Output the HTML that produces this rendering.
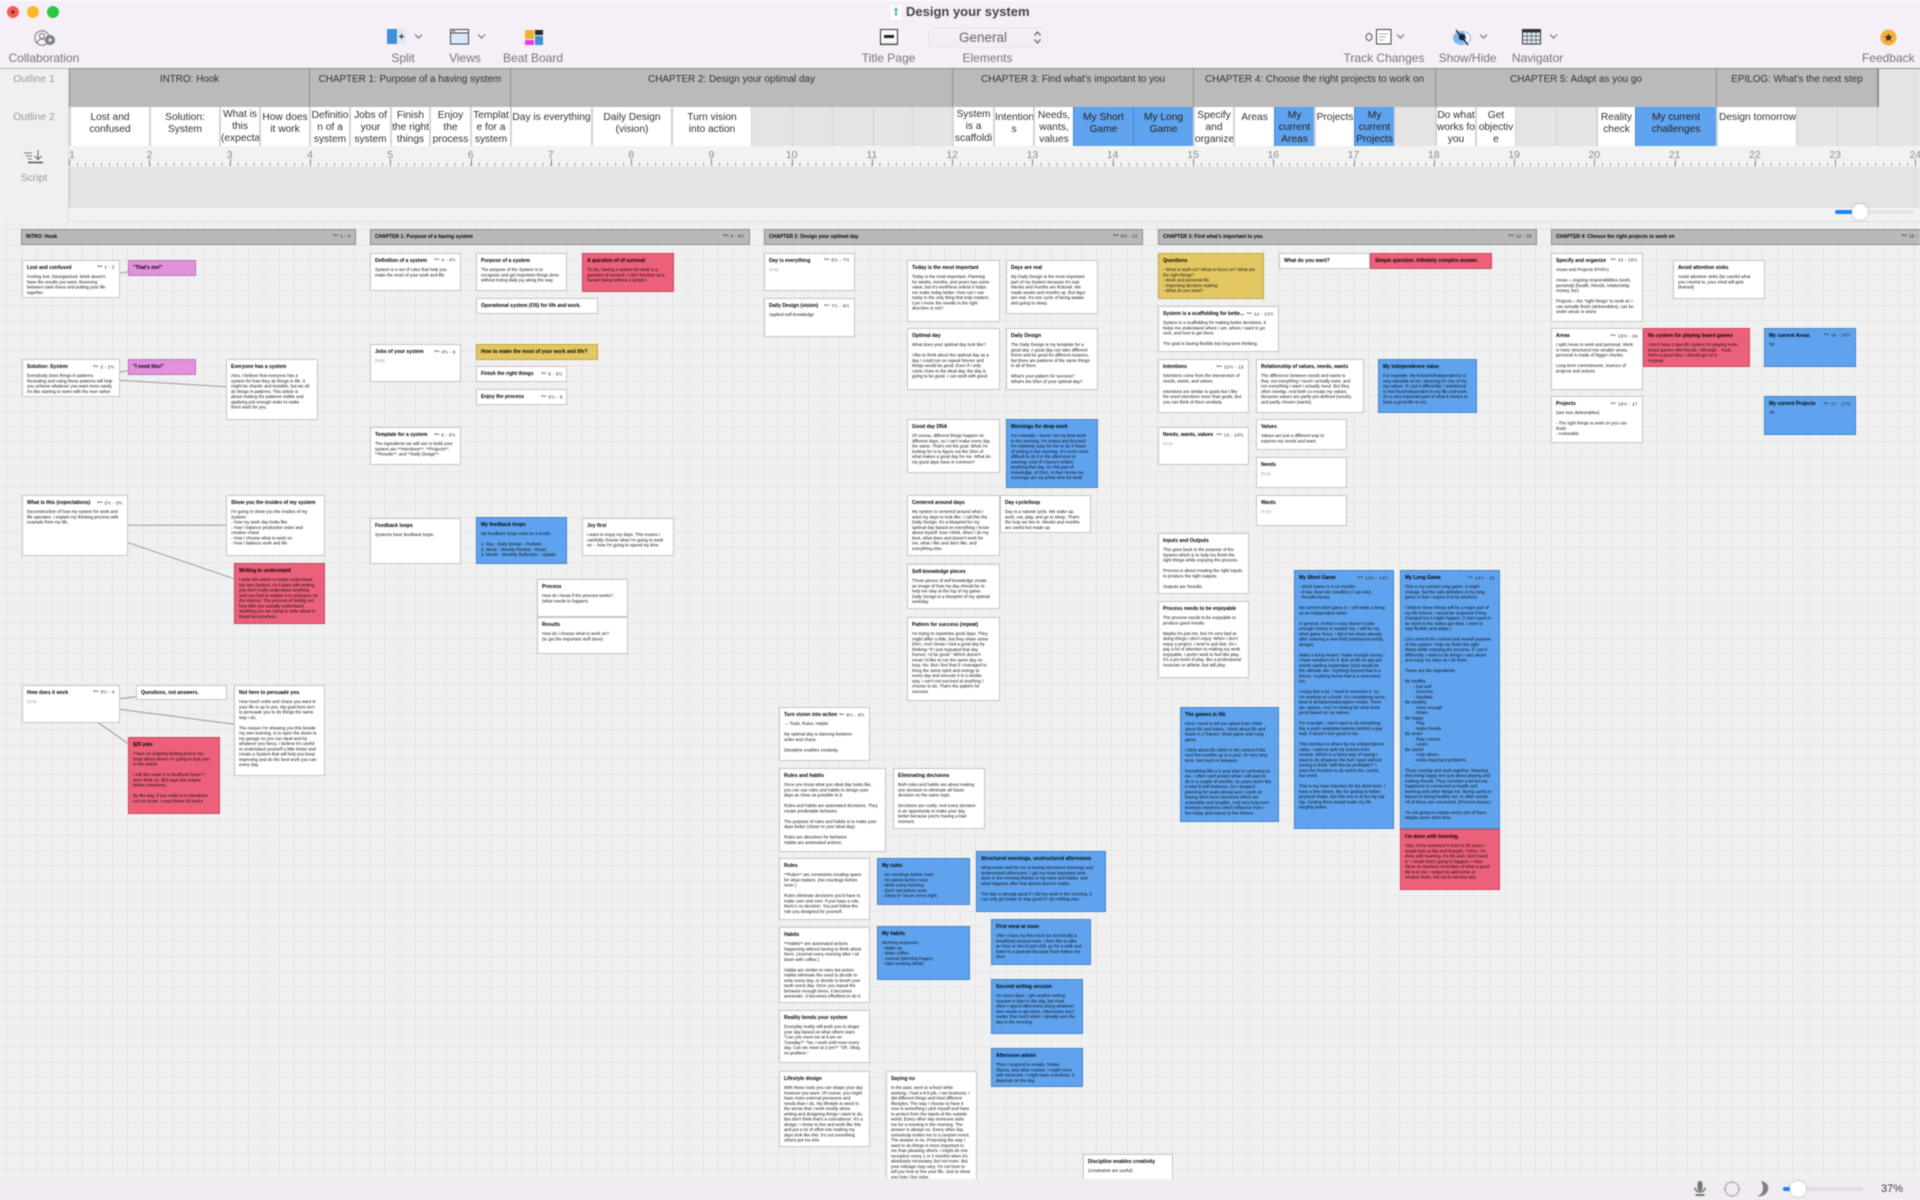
<!DOCTYPE html>
<html><head><meta charset="utf-8"><title>Design your system</title>
<style>
html,body{margin:0;padding:0;width:1920px;height:1200px;overflow:hidden;background:#f5eff7}
#a{position:relative;width:1920px;height:1200px;overflow:hidden;font-family:"Liberation Sans",sans-serif;filter:blur(.6px);background:#f0f0f0}
.ab{position:absolute}
.lb{position:absolute;top:51px;font-size:12px;line-height:15px;color:#757575;transform:translateX(-50%);white-space:nowrap}
#tb{position:absolute;left:0;top:0;width:1920px;height:68px;background:#f5eff7;border-top:1px solid #fff;box-sizing:border-box}
.o1,.o2{position:absolute;box-sizing:border-box;overflow:hidden;text-align:center;line-height:12px;color:#333;white-space:nowrap}
.o1{top:68px;height:39px;font-size:9.900px;background:#bababa;border-left:1px solid #8f8f8f;border-top:1px solid #8f8f8f;padding-top:5px}
.o2{top:107px;height:39px;font-size:10.200px;background:#fff;border-left:2px solid #d4d4d4;padding-top:5px}
.o2.t{padding-top:2px}
.o2.e{background:#e4e4e4;border-left:1px solid #d2d2d2}
.o2.x{background:#5fa3ee;border-left:1px solid #4a86c8;color:#222}
.side{position:absolute;left:0;width:69px;text-align:center;font-size:10.400px;color:#9a9a9a;background:#f0f0f0;box-sizing:border-box;border-right:1px solid #dcdcdc}
em{position:absolute;top:149px;font-style:normal;font-size:10.400px;line-height:13px;color:#8a8a8a;transform:translateX(-50%)}
i.k{position:absolute;top:159px;width:1px;height:7px;background:#8a8a8a}
#cv{position:absolute;left:0;top:222px;width:1920px;height:957px;overflow:hidden;background-color:#f0f0f0;background-image:repeating-linear-gradient(90deg,transparent 0,transparent 6px,#e5e5e5 6px,#e5e5e5 7px,transparent 7px,transparent 15.140px),repeating-linear-gradient(180deg,transparent 0,transparent 7.200px,#e5e5e5 7.200px,#e5e5e5 8.200px,transparent 8.200px,transparent 15.140px)}
#in{position:absolute;left:0;top:-222px;width:1920px;height:1179px;overflow:hidden}
.c{position:absolute;box-sizing:border-box;background:#fff;border:1px solid #c6c6c6}
.c.bl{background:#5fa3ee;border-color:#4a86c6}
.c.r{background:#ec607a;border-color:#c94a64}
.c.pk{background:#e292dd;border-color:#b878b6}
.c.y{background:#e3c763;border-color:#c2a544}
.c.h{background:#b9b9b9;border:1px solid #8f8f8f;height:16px;top:229.300px}
.c.clip{overflow:hidden}
.c b{position:absolute;left:4px;top:4.200px;font-size:20px;line-height:20px;color:#000;font-weight:bold;white-space:nowrap;transform:scale(.25);transform-origin:0 0}
.c p{margin:0;position:absolute;left:4px;top:13.100px;font-size:17.500px;line-height:21px;color:#111;white-space:pre;transform:scale(.25);transform-origin:0 0}
.c p.g{color:#aaa}
.c.bl p,.c.r p{color:#0c0c0c}
.c u{position:absolute;right:4px;top:3.400px;font-size:18px;line-height:18px;color:#222;text-decoration:none;white-space:nowrap;transform:scale(.25);transform-origin:100% 0;letter-spacing:1px}
.c u small{font-size:10px;vertical-align:7px;margin-right:8px;letter-spacing:0}
.c.h b{top:3.800px}
.c.h u{top:3px}
</style></head><body><div id="a">

<div id="tb"></div>
<svg class="ab" style="left:0;top:0" width="70" height="24"><circle cx="13" cy="12" r="6" fill="#f25f57"/><circle cx="33" cy="12" r="6" fill="#fcb62d"/><circle cx="53" cy="12" r="6" fill="#2ac840"/><circle cx="13" cy="12" r="1.600" fill="#8c1a14"/></svg>
<svg class="ab" style="left:890px;top:4px" width="12" height="17"><rect x="1" y="1" width="10" height="15" fill="#fff"/><path d="M6 3L3.500 6.500H5V12H7V6.500H8.500Z" fill="#62c28a"/></svg>
<div class="ab" style="left:906px;top:4px;font-size:13px;line-height:16px;font-weight:bold;color:#444;white-space:nowrap">Design your system</div>

<!-- Collaboration -->
<svg class="ab" style="left:34px;top:30px" width="23" height="16" viewBox="0 0 23 16"><circle cx="8" cy="8" r="7.200" fill="none" stroke="#777" stroke-width="1"/><circle cx="8" cy="6" r="2.600" fill="none" stroke="#777"/><path d="M3 13c1-3 3-4 5-4s4 1 5 4" fill="none" stroke="#777"/><circle cx="16" cy="10" r="5" fill="#7a7a7a"/><path d="M16 7.500v5M13.500 10h5" stroke="#fff" stroke-width="1.100"/></svg>
<div class="lb" style="left:44px">Collaboration</div>
<!-- Split -->
<svg class="ab" style="left:387px;top:29px" width="20" height="16"><rect width="10" height="15" fill="#3f8fd8"/><rect x="10" width="9" height="15" fill="#dfe9f6"/><path d="M14.500 5v5M12 7.500h5" stroke="#222" stroke-width="1"/></svg>
<svg class="ab" style="left:414px;top:33px" width="9" height="7"><path d="M1 1.500L4.500 5L8 1.500" fill="none" stroke="#777" stroke-width="1.200"/></svg>
<div class="lb" style="left:403px">Split</div>
<!-- Views -->
<svg class="ab" style="left:450px;top:29px" width="19" height="16"><rect x=".5" y=".5" width="18" height="14.500" fill="#d9e8f9" stroke="#444"/><rect x=".5" y=".5" width="18" height="3.500" fill="#f4f4f4" stroke="#444"/><path d="M2 2.200h3" stroke="#444"/></svg>
<svg class="ab" style="left:477px;top:33px" width="9" height="7"><path d="M1 1.500L4.500 5L8 1.500" fill="none" stroke="#777" stroke-width="1.200"/></svg>
<div class="lb" style="left:465px">Views</div>
<!-- Beat Board -->
<svg class="ab" style="left:525px;top:30px" width="19" height="16"><rect width="9" height="9" fill="#efb02f"/><rect x="10" width="8" height="5" fill="#2a2a2a"/><rect y="10" width="9" height="5" fill="#e33fe0"/><rect x="10" y="6" width="8" height="9" fill="#3f8fd8"/></svg>
<div class="lb" style="left:533px">Beat Board</div>
<!-- Title page -->
<svg class="ab" style="left:880px;top:29px" width="19" height="17"><rect x=".5" y=".5" width="17" height="15" fill="#f8f8f8" stroke="#333"/><rect x="4" y="6" width="10" height="3" fill="#222"/><path d="M1 14.500h16" stroke="#888" stroke-dasharray="1 1"/></svg>
<div class="lb" style="left:888.500px">Title Page</div>
<!-- Elements -->
<div class="ab" style="left:928px;top:27px;width:120px;height:21px;box-sizing:border-box;border:1px solid #ebe5ed;border-radius:5px;background:#f3edf5;font-size:13.500px;line-height:19px;color:#666;padding-left:30px">General</div>
<svg class="ab" style="left:1033px;top:30px" width="9" height="15"><path d="M1.500 5.500L4.500 2L7.500 5.500M1.500 9.500L4.500 13L7.500 9.500" fill="none" stroke="#666" stroke-width="1.300"/></svg>
<div class="lb" style="left:987.500px">Elements</div>
<!-- Track Changes -->
<svg class="ab" style="left:1364px;top:29px" width="28" height="16"><ellipse cx="5" cy="8" rx="3" ry="3.500" fill="none" stroke="#555" stroke-width="1"/><rect x="12.500" y=".5" width="14.500" height="14.500" fill="#fff" stroke="#444"/><path d="M15 5h9M15 8h7M15 11h5" stroke="#aaa"/></svg>
<svg class="ab" style="left:1396px;top:33px" width="9" height="7"><path d="M1 1.500L4.500 5L8 1.500" fill="none" stroke="#777" stroke-width="1.200"/></svg>
<div class="lb" style="left:1384px">Track Changes</div>
<!-- Show/Hide -->
<svg class="ab" style="left:1452px;top:29px" width="20" height="17"><ellipse cx="10" cy="9" rx="8.500" ry="6.500" fill="#fff" stroke="#7fb0e8"/><ellipse cx="8" cy="9" rx="6.500" ry="6.500" fill="#7fb5ee"/><circle cx="10" cy="8" r="3.300" fill="#1d2a3a"/><path d="M4 1l12 15" stroke="#222" stroke-width="1.400"/></svg>
<svg class="ab" style="left:1479px;top:33px" width="9" height="7"><path d="M1 1.500L4.500 5L8 1.500" fill="none" stroke="#777" stroke-width="1.200"/></svg>
<div class="lb" style="left:1467.600px">Show/Hide</div>
<!-- Navigator -->
<svg class="ab" style="left:1522px;top:29px" width="20" height="16"><rect x=".5" y=".5" width="18" height="14.500" fill="#d9e8f9" stroke="#333"/><rect x=".5" y=".5" width="18" height="3" fill="#333"/><path d="M5 3v12M9.500 3v12M14 3v12M1 7h17M1 11h17" stroke="#555" stroke-width=".7"/></svg>
<svg class="ab" style="left:1549px;top:33px" width="9" height="7"><path d="M1 1.500L4.500 5L8 1.500" fill="none" stroke="#777" stroke-width="1.200"/></svg>
<div class="lb" style="left:1537.500px">Navigator</div>
<!-- Feedback -->
<svg class="ab" style="left:1880px;top:29px" width="17" height="17"><circle cx="8.500" cy="8.500" r="8" fill="#f4b23c"/><path d="M8.500 4.300l1.200 2.800 3 .2-2.300 1.900.8 3-2.700-1.600-2.700 1.600.8-3L4.300 7.300l3-.2z" fill="#333"/></svg>
<div class="lb" style="left:1888.300px">Feedback</div>

<!-- Side labels -->
<div class="side" style="top:68px;height:39px;line-height:22px;border-top:1px solid #b5b5b5">Outline 1</div>
<div class="side" style="top:107px;height:39px;line-height:22px">Outline 2</div>
<div class="side" style="top:146px;height:22px"></div>
<div class="side" style="top:168px;height:39px;line-height:22px">Script</div>
<div class="side" style="top:207px;height:15px"></div>

<!-- Outline 1 -->
<div class="o1" style="left:69px;width:240px">INTRO: Hook</div>
<div class="o1" style="left:309px;width:201px">CHAPTER 1: Purpose of a having system</div>
<div class="o1" style="left:510px;width:442px">CHAPTER 2: Design your optimal day</div>
<div class="o1" style="left:952px;width:241px">CHAPTER 3: Find what's important to you</div>
<div class="o1" style="left:1193px;width:242px">CHAPTER 4: Choose the right projects to work on</div>
<div class="o1" style="left:1435px;width:281px">CHAPTER 5: Adapt as you go</div>
<div class="o1" style="left:1716px;width:161px">EPILOG: What's the next step</div>
<div class="o1" style="left:1877px;width:43px;background:#e4e4e4;border-left:2px solid #8f8f8f"></div>

<!-- Outline 2 -->
<div class="o2" style="left:69px;width:80px">Lost and<br>confused</div>
<div class="o2" style="left:149px;width:70px">Solution:<br>System</div>
<div class="o2 t" style="left:219px;width:40px">What is<br>this<br>(expecta</div>
<div class="o2" style="left:259px;width:50px">How does<br>it work</div>
<div class="o2 t" style="left:309px;width:40px;padding-top:3px">Definitio<br>n of a<br>system</div>
<div class="o2 t" style="left:349px;width:41px;padding-top:3px">Jobs of<br>your<br>system</div>
<div class="o2 t" style="left:390px;width:39px;padding-top:3px">Finish<br>the right<br>things</div>
<div class="o2 t" style="left:429px;width:41px;padding-top:3px">Enjoy<br>the<br>process</div>
<div class="o2 t" style="left:470px;width:40px;padding-top:3px">Templat<br>e for a<br>system</div>
<div class="o2" style="left:510px;width:81px">Day is everything</div>
<div class="o2" style="left:591px;width:80px">Daily Design<br>(vision)</div>
<div class="o2" style="left:671px;width:80px">Turn vision<br>into action</div>
<div class="o2 e" style="left:751px;width:41px"></div>
<div class="o2 e" style="left:792px;width:40px"></div>
<div class="o2 e" style="left:832px;width:41px"></div>
<div class="o2 e" style="left:873px;width:39px"></div>
<div class="o2 e" style="left:912px;width:40px"></div>
<div class="o2 t" style="left:952px;width:41px">System<br>is a<br>scaffoldi</div>
<div class="o2" style="left:993px;width:40px">Intention<br>s</div>
<div class="o2 t" style="left:1033px;width:40px;padding-top:3px">Needs,<br>wants,<br>values</div>
<div class="o2 x" style="left:1073px;width:60px">My Short<br>Game</div>
<div class="o2 x" style="left:1133px;width:60px">My Long<br>Game</div>
<div class="o2 t" style="left:1193px;width:40px;padding-top:3px">Specify<br>and<br>organize</div>
<div class="o2" style="left:1233px;width:41px">Areas</div>
<div class="o2 x t" style="left:1274px;width:40px;padding-top:3px">My<br>current<br>Areas</div>
<div class="o2" style="left:1314px;width:40px">Projects</div>
<div class="o2 x t" style="left:1354px;width:40px;padding-top:3px">My<br>current<br>Projects</div>
<div class="o2 e" style="left:1394px;width:41px"></div>
<div class="o2 t" style="left:1435px;width:40px;padding-top:3px">Do what<br>works for<br>you</div>
<div class="o2 t" style="left:1475px;width:40px;padding-top:3px">Get<br>objectiv<br>e</div>
<div class="o2 e" style="left:1515px;width:41px"></div>
<div class="o2 e" style="left:1556px;width:40px"></div>
<div class="o2" style="left:1596px;width:39px">Reality<br>check</div>
<div class="o2 x" style="left:1635px;width:81px">My current<br>challenges</div>
<div class="o2" style="left:1716px;width:80px;text-align:left;padding-left:1px">Design tomorrow</div>
<div class="o2 e" style="left:1796px;width:41px"></div>
<div class="o2 e" style="left:1837px;width:40px"></div>
<div class="o2 e" style="left:1877px;width:43px"></div>

<!-- Ruler -->
<div class="ab" style="left:69px;top:146px;width:1851px;height:22px;background:#f2f2f2;border-bottom:1px solid #dedede;box-sizing:border-box"></div>
<div class="ab" style="left:69px;top:163px;width:1851px;height:3px;background:repeating-linear-gradient(90deg,#9a9a9a 0,#9a9a9a 1px,transparent 1px,transparent 8.027px)"></div>
<i class="k" style="left:69px"></i><i class="k" style="left:149px"></i><i class="k" style="left:230px"></i><i class="k" style="left:310px"></i><i class="k" style="left:390px"></i><i class="k" style="left:471px"></i><i class="k" style="left:551px"></i><i class="k" style="left:631px"></i><i class="k" style="left:711px"></i><i class="k" style="left:792px"></i><i class="k" style="left:872px"></i><i class="k" style="left:952px"></i><i class="k" style="left:1032px"></i><i class="k" style="left:1113px"></i><i class="k" style="left:1193px"></i><i class="k" style="left:1273px"></i><i class="k" style="left:1354px"></i><i class="k" style="left:1434px"></i><i class="k" style="left:1514px"></i><i class="k" style="left:1594px"></i><i class="k" style="left:1675px"></i><i class="k" style="left:1755px"></i><i class="k" style="left:1835px"></i><i class="k" style="left:1915px"></i>
<em style="left:72px">1</em><em style="left:149.500px">2</em><em style="left:229.700px">3</em><em style="left:310px">4</em><em style="left:390.300px">5</em><em style="left:470.600px">6</em><em style="left:550.800px">7</em><em style="left:631.100px">8</em><em style="left:711.400px">9</em><em style="left:791.600px">10</em><em style="left:871.900px">11</em><em style="left:952.200px">12</em><em style="left:1032.400px">13</em><em style="left:1112.700px">14</em><em style="left:1193px">15</em><em style="left:1273.300px">16</em><em style="left:1353.500px">17</em><em style="left:1433.800px">18</em><em style="left:1514.100px">19</em><em style="left:1594.300px">20</em><em style="left:1674.600px">21</em><em style="left:1754.900px">22</em><em style="left:1835.200px">23</em><em style="left:1915.400px">24</em>
<svg class="ab" style="left:22px;top:148px" width="26" height="16"><path d="M2 5h8M4 8h6M6 11h4" stroke="#777" stroke-width="1"/><path d="M16 2v9M12.500 8l3.500 3.500L19.500 8" fill="none" stroke="#666" stroke-width="1"/><path d="M6 14.500h15" stroke="#555" stroke-width="1.500"/></svg>

<!-- Script -->
<div class="ab" style="left:69px;top:168px;width:1851px;height:39px;background:#e4e4e4;border-left:1px solid #b9c9dc;box-sizing:border-box"></div>
<div class="ab" style="left:69px;top:207px;width:1851px;height:15px;background:#f2f2f2;border-top:1px solid #dedede;border-bottom:1px solid #dedede;box-sizing:border-box"></div>
<div class="ab" style="left:1835px;top:210px;width:79px;height:4px;background:#e4e4e4;border-radius:2px"></div>
<div class="ab" style="left:1835px;top:210px;width:22px;height:4px;background:#1e82ef;border-radius:2px"></div>
<div class="ab" style="left:1852px;top:204px;width:16px;height:16px;background:#fff;border-radius:50%;box-shadow:0 0 2px #aaa"></div>

<!-- Canvas -->
<div id="cv"><div id="in">
<svg class="ab" style="left:0;top:0" width="1920" height="1179" fill="none" stroke="#999" stroke-width="1">
<path d="M120 273.300L127.700 271.700M120 372L127.700 370.700M120 380.300L226 386.700M128 525.300H226M128 542.700L234 578.700M120 698.700L135.700 696.700M120 709.300L234.300 724.300M98.300 722.700L127.700 743.300"/>
</svg>

<!-- INTRO -->
<div class="c h" style="left:21.300px;width:334.400px"><b>INTRO: Hook</b><u><small>Beat</small>1 - 4</u></div>
<div class="c" style="left:21.700px;top:260px;width:98.300px;height:38.300px"><b>Lost and confused</b><u><small>Beat</small>1 - 2</u><p>Feeling lost. Disorganized. Work doesn't
have the results you want. Bouncing
between total chaos and putting your life
together.</p></div>
<div class="c pk" style="left:127.700px;top:260px;width:68.600px;height:16.300px"><b>"That's me!"</b></div>
<div class="c" style="left:21.700px;top:359.300px;width:98.300px;height:37.400px"><b>Solution: System</b><u><small>Beat</small>2 - 2½</u><p>Everybody does things in patterns.
Revealing and using these patterns will help
you achieve whatever you want more easily.
It's like starting to swim with the river rather</p></div>
<div class="c pk" style="left:127.700px;top:359.300px;width:68.600px;height:15.400px"><b>"I need this!"</b></div>
<div class="c" style="left:226px;top:359.300px;width:91.700px;height:60.400px"><b>Everyone has a system</b><p>Also, I believe that everyone has a
system for how they do things in life. It
might be chaotic and invisible, but we all
do things in patterns. This article is
about making the patterns visible and
applying just enough order to make
them work for you.</p></div>
<div class="c" style="left:21.700px;top:495.300px;width:106.300px;height:60.400px"><b>What is this (expectations)</b><u><small>Beat</small>2½ - 3½</u><p>Deconstruction of how my system for work and
life operates. I explain my thinking process with
example from my life.</p></div>
<div class="c" style="left:226px;top:495.300px;width:98.700px;height:60.400px"><b>Show you the insides of my system</b><p>I'm going to show you the insides of my
System:
- How my work day looks like
- How I balance productive order and
creative chaos
- How I choose what to work on
- How I balance work and life</p></div>
<div class="c r" style="left:234px;top:563.300px;width:90.700px;height:61px"><b>Writing to understand</b><p>I write this article to better understand
my own System. As it goes with writing,
you don't really understand anything
until you had to explain it to strangers on
the internet. The process of finding out
how little you actually understand
anything you are trying to write about is
brutal but priceless.</p></div>
<div class="c" style="left:21.700px;top:685px;width:98.300px;height:37.700px"><b>How does it work</b><u><small>Beat</small>3½ - 4</u><p class="g">Body</p></div>
<div class="c" style="left:135.700px;top:685px;width:91px;height:15.300px"><b>Questions, not answers.</b></div>
<div class="c" style="left:234.300px;top:685px;width:90.400px;height:90.700px"><b>Not here to persuade you</b><p>How much order and chaos you want in
your life is up to you. My goal here isn't
to persuade you to do things the same
way I do.

The reason I'm showing you this beside
my own learning, is to open the doors to
my garage so you can steal and try
whatever you fancy. I believe it's useful
to understand yourself a little better and
create a System that will help you keep
improving and do the best work you can
every day.</p></div>
<div class="c r" style="left:127.700px;top:737px;width:92px;height:77px"><b>$20 joke</b><p>I have an ongoing betting pool in my
head about where I'm going to lose you
in this article.

I will she make it to feedback loops? I
don't think so. $20 says she leaves
before Intentions.

By the way, if you make it to Intentions.
Let me know. I need those 20 bucks.</p></div>

<!-- CHAPTER 1 -->
<div class="c h" style="left:370px;width:380px"><b>CHAPTER 1: Purpose of a having system</b><u><small>Beat</small>4 - 6½</u></div>
<div class="c" style="left:370.300px;top:252.700px;width:90.400px;height:38.600px"><b>Definition of a system</b><u><small>Beat</small>4 - 4½</u><p>System is a set of rules that help you
make the most of your work and life.</p></div>
<div class="c" style="left:476.300px;top:252.700px;width:91px;height:38.600px"><b>Purpose of a system</b><p>The purpose of the System is to
recognize and get important things done
without losing daily joy along the way.</p></div>
<div class="c r" style="left:581.700px;top:252.700px;width:92.300px;height:39px"><b>A question of of survival</b><p>To me, having a system for work is a
question of survival. I can't function as a
human being without a system.</p></div>
<div class="c" style="left:476.300px;top:298.300px;width:121.400px;height:15.400px"><b>Operational system (OS) for life and work.</b></div>
<div class="c" style="left:370.300px;top:344.300px;width:90.400px;height:37.400px"><b>Jobs of your system</b><u><small>Beat</small>4½ - 5</u><p class="g">Body</p></div>
<div class="c y" style="left:476.300px;top:344px;width:121.400px;height:15.700px"><b>How to make the most of your work and life?</b></div>
<div class="c" style="left:476.300px;top:366.300px;width:91px;height:15.400px"><b>Finish the right things</b><u><small>Beat</small>5 - 5½</u></div>
<div class="c" style="left:476.300px;top:389.300px;width:91px;height:15.400px"><b>Enjoy the process</b><u><small>Beat</small>5½ - 6</u></div>
<div class="c" style="left:370.300px;top:427.300px;width:90.400px;height:37.400px"><b>Template for a system</b><u><small>Beat</small>6 - 6½</u><p>The ingredients we will use to build your
system are **Intentions**, **Projects**,
**Results**, and **Daily Design**.</p></div>
<div class="c" style="left:370.300px;top:517.700px;width:90.400px;height:46.300px"><b>Feedback loops</b><p>Systems have feedback loops.</p></div>
<div class="c bl" style="left:476.300px;top:517.300px;width:91px;height:46.700px"><b>My feedback loops</b><p>My feedback loops exist on 3 levels.

1. Day - Daily Design - Perform
2. Week - Weekly Review - Reset
3. Month - Monthly Reflection - Update</p></div>
<div class="c" style="left:581.700px;top:517.700px;width:92px;height:38.300px"><b>Joy first</b><p>I want to enjoy my days. This means I
carefully choose what I'm going to work
on -- how I'm going to spend my time.</p></div>
<div class="c" style="left:537px;top:578.700px;width:91.300px;height:38.400px"><b>Process</b><p>How do I know if the process works?
(what needs to happen)</p></div>
<div class="c" style="left:537px;top:616.700px;width:91.300px;height:37.600px"><b>Results</b><p>How do I choose what to work on?
(to get the important stuff done)</p></div>

<!-- CHAPTER 2 -->
<div class="c h" style="left:764.300px;width:378.400px"><b>CHAPTER 2: Design your optimal day</b><u><small>Beat</small>6½ - 12</u></div>
<div class="c" style="left:764.300px;top:252.700px;width:90.400px;height:38.600px"><b>Day is everything</b><u><small>Beat</small>6½ - 7½</u><p class="g">Body</p></div>
<div class="c" style="left:764.300px;top:298.300px;width:90.400px;height:38.400px"><b>Daily Design (vision)</b><u><small>Beat</small>7½ - 8½</u><p>Applied self-knowledge</p></div>
<div class="c" style="left:907.300px;top:260px;width:92.400px;height:61.700px"><b>Today is the most important</b><p>Today is the most important. Planning
for weeks, months, and years has some
value, but it's worthless unless it helps
me make today better. How can I use
today in the only thing that truly matters.
Can I move the needle in the right
direction or not?</p></div>
<div class="c" style="left:1006px;top:260px;width:91.700px;height:53.700px"><b>Days are real</b><p>My Daily Design is the most important
part of my System because it's real.
Weeks and months are fictional. We
made weeks and months up. But days
are real. It's one cycle of being awake
and going to sleep.</p></div>
<div class="c" style="left:907.300px;top:328.300px;width:92.400px;height:61.400px"><b>Optimal day</b><p>What does your optimal day look like?

I like to think about the optimal day as a
day I could run on repeat forever and
things would be good. Even if I only
come close to the ideal day, the day is
going to be good. I can work with good.</p></div>
<div class="c" style="left:1006px;top:328.300px;width:91.700px;height:61.400px"><b>Daily Design</b><p>The Daily Design is my template for a
good day. A good day can take different
forms and be good for different reasons,
but there are patterns of the same things
in all of them.

What's your pattern for success?
What's the DNA of your optimal day?</p></div>
<div class="c" style="left:907.300px;top:419.300px;width:92.400px;height:53.400px"><b>Good day DNA</b><p>Of course, different things happen on
different days, so I can't make every day
the same. That's not the goal. What I'm
looking for is to figure out the DNA of
what makes a good day for me. What do
my good days have in common?</p></div>
<div class="c bl" style="left:1006px;top:419.300px;width:92px;height:68.700px"><b>Mornings for deep work</b><p>For example: I know I do my best work
in the morning. I'm rested and focused.
It's relatively easy for me to do 3 hours
of writing in the morning. It's much more
difficult to do it in the afternoon or
evening, even if I haven't written
anything that day. So this part of
knowledge, of DNA, is that I know my
mornings are my prime time for work.</p></div>
<div class="c" style="left:907.300px;top:495.300px;width:92.400px;height:60.400px"><b>Centered around days</b><p>My system is centered around what I
want my days to look like. I call this the
Daily Design. It's a blueprint for my
optimal day based on everything I know
about myself: how I think, when I do my
best, what does and doesn't work for
me, what I like and don't like, and
everything else.</p></div>
<div class="c" style="left:999.700px;top:495.300px;width:91px;height:37.400px"><b>Day cycle/loop</b><p>Day is a natural cycle. We wake up,
work, eat, play, and go to sleep. That's
the loop we live in. Weeks and months
are useful but made up.</p></div>
<div class="c" style="left:907.300px;top:563.700px;width:92.400px;height:45.300px"><b>Self-knowledge pieces</b><p>These pieces of self-knowledge create
an image of how my day should be to
help me stay at the top of my game.
Daily Design is a blueprint of my optimal
workday.</p></div>
<div class="c" style="left:907.300px;top:617px;width:92.400px;height:83.700px"><b>Pattern for success (repeat)</b><p>I'm trying to maximize good days. They
might differ a little, but they share some
DNA. And I know I had a good day by
thinking "If I just repeated that day
forever, I'd be good." Which doesn't
mean I'd like to run the same day on
loop. No. But I feel that if I managed to
bring the same spirit and energy to
every day and execute it in a similar
way, I can't not succeed at anything I
choose to do. That's the pattern for
success.</p></div>
<div class="c" style="left:779.300px;top:707.300px;width:90.700px;height:53.400px"><b>Turn vision into action</b><u><small>Beat</small>8½ - 9½</u><p>→ Tools, Rules, Habits

My optimal day is dancing between
order and chaos.

Discipline enables creativity.</p></div>
<div class="c" style="left:779.300px;top:768.300px;width:106.700px;height:83.700px"><b>Rules and habits</b><p>Once you know what you ideal day looks like,
you can use rules and habits to design your
days as close as possible to it.

Rules and habits are automated decisions. They
create predictable behavior.

The purpose of rules and habits is to make your
days better (closer to your ideal day).

Rules are directives for behavior.
Habits are automated actions.</p></div>
<div class="c" style="left:892.700px;top:768.300px;width:92px;height:60.400px"><b>Eliminating decisions</b><p>Both rules and habits are about making
one decision to eliminate all future
decision on the same topic.

Decisions are costly. And every decision
is an opportunity to make your day
better because you're having a bad
moment.</p></div>
<div class="c" style="left:779.300px;top:858.300px;width:90.700px;height:61.700px"><b>Rules</b><p>**Rules** are constraints creating space
for what matters. (No meetings before
noon.)

Rules eliminate decisions you'd have to
make over and over. If you have a rule,
there's no decision. You just follow the
rule you designed for yourself.</p></div>
<div class="c bl" style="left:975.700px;top:851.300px;width:130.300px;height:60.700px"><b>Structured mornings, unstructured afternoons</b><p>What works well for me is having structured mornings and
unstructured afternoons. I get my most important work
done in the morning thanks to my rules and habits, and
what happens after that almost doesn't matter.

The day is already good if I did my work in the morning. It
can only get better or stay good if I do nothing else.</p></div>
<div class="c bl" style="left:877.300px;top:858px;width:92.400px;height:47px"><b>My rules</b><p>- No meetings before noon
- No admin before noon
- Write every morning
- Don't eat before noon
- Sleep 8+ hours every night</p></div>
<div class="c bl" style="left:991px;top:919.300px;width:100px;height:46px"><b>First meal at noon</b><p>After I have my first meal (so technically a
breakfast) around noon, I then like to take
an hour or two to just chill, go for a walk and
listen to a podcast because food makes me
slow.</p></div>
<div class="c" style="left:779.300px;top:926.700px;width:90.700px;height:76.600px"><b>Habits</b><p>**Habits** are automated actions
happening without having to think about
them. (Journal every morning after I sit
down with coffee.)

Habits are similar to rules but action.
Habits eliminate the need to decide to
write every day, or decide to brush your
teeth every day. Once you repeat the
behavior enough times, it becomes
automatic. It becomes effortless to do it.</p></div>
<div class="c bl" style="left:877.300px;top:926.300px;width:92.400px;height:54px"><b>My habits</b><p>Morning sequence:
- Wake up
- Make coffee
- Journal (Morning Pages)
- Start working (WIW)</p></div>
<div class="c bl" style="left:991px;top:979.300px;width:92px;height:54.400px"><b>Second writing session</b><p>On some days, I get another writing
session in later in the day, but most
often I spend afternoons doing whatever
else needs to get done. Afternoons don't
matter that much when I already won the
day in the morning.</p></div>
<div class="c" style="left:779.300px;top:1010px;width:90.700px;height:53.300px"><b>Reality bends your system</b><p>Everyday reality will push you to shape
your day based on what others want.
"Can you meet me at 9 am on
Tuesday?" "No, I work until noon every
day. Can we meet at 2 pm?" "Oh. Okay,
no problem."</p></div>
<div class="c bl" style="left:991px;top:1047.700px;width:92px;height:39px"><b>Afternoon admin</b><p>Then I respond to emails, Twitter,
Slacks, and other comms. I might meet
with someone. I might have a workout. It
depends on the day.</p></div>
<div class="c" style="left:779.300px;top:1071px;width:90.700px;height:75.700px"><b>Lifestyle design</b><p>With these tools you can shape your day
however you want. Of course, you might
have more external pressures and
needs than I do. My lifestyle is weird in
the sense that I work mostly alone,
writing and designing things I want to do.
But don't think that's a coincidence. It's a
design. I chose to live and work like this
and put a lot of effort into making my
days look like this. It's not something
others put me into.</p></div>
<div class="c clip" style="left:885.700px;top:1071px;width:91px;height:108px;border-bottom:0"><b>Saying no</b><p>In the past, went to school while
working, I had a 9-5 job, I ran business. I
did different things and tried different
lifestyles. The way I choose to have it
now is something I pick myself and have
to protect from the inputs of the outside
world. Every other day someone asks
me for a meeting in the morning. The
answer is always no. Every other day
somebody invites me to a random event.
The answer is no. Protecting the way I
want to do things is more important to
me than pleasing others. I might do one
exception every 1 or 2 months when it's
absolutely necessary, but not more. But
your mileage may vary. I'm not here to
tell you how to live your life. Just to show
you how I live mine.</p></div>
<div class="c clip" style="left:1082.700px;top:1154.300px;width:90.600px;height:24.700px;border-bottom:0"><b>Discipline enables creativity</b><p>(constraints are useful)</p></div>

<!-- CHAPTER 3 -->
<div class="c h" style="left:1158.300px;width:378.400px"><b>CHAPTER 3: Find what's important to you</b><u><small>Beat</small>12 - 15</u></div>
<div class="c y" style="left:1158.300px;top:252.700px;width:105.700px;height:46px"><b>Questions</b><p>- What to work on? What to focus on? What are
the right things?
- Work and personal life
- Improving decision making
- What do you want?</p></div>
<div class="c" style="left:1278.700px;top:253.300px;width:91.300px;height:15.400px"><b>What do you want?</b></div>
<div class="c r" style="left:1370px;top:252.700px;width:122px;height:16px"><b>Simple question. Infinitely complex answer.</b></div>
<div class="c" style="left:1158.300px;top:306.300px;width:120.400px;height:45.400px"><b>System is a scaffolding for bette...</b><u><small>Beat</small>12 - 12½</u><p>System is a scaffolding for making better decisions. It
helps me understand where I am, where I want to go
next, and how to get there.

The goal is having flexible but long-term thinking.</p></div>
<div class="c" style="left:1158.300px;top:359.300px;width:90.700px;height:53.400px"><b>Intentions</b><u><small>Beat</small>12½ - 13</u><p>Intentions come from the intersection of
needs, wants, and values.

Intentions are similar to goals but I like
the word intentions more than goals. But
you can think of them similarly.</p></div>
<div class="c" style="left:1256.300px;top:359.300px;width:107.400px;height:53.400px"><b>Relationship of values, needs, wants</b><p>The difference between needs and wants is
that, not everything I need I actually want, and
not everything I want I actually need. But they
often overlap. And both co-create my values.
Because values are partly pre-defined (needs),
and partly chosen (wants).</p></div>
<div class="c bl" style="left:1377.700px;top:359.300px;width:99.300px;height:53.700px"><b>My independence value</b><p>For example: My freedom/independence is
very valuable to me. Meaning it's one of my
top values. If I put it differently: I want/need
to feel free/independent in my life and work.
It's a very important part of what it means to
have a good life to me.</p></div>
<div class="c" style="left:1158.300px;top:427.300px;width:90.700px;height:37.400px"><b>Needs, wants, values</b><u><small>Beat</small>13 - 13½</u><p class="g">Body</p></div>
<div class="c" style="left:1256.300px;top:419.300px;width:91px;height:30.700px"><b>Values</b><p>Values are just a different way to
express my needs and want.</p></div>
<div class="c" style="left:1256.300px;top:457.300px;width:91px;height:30.700px"><b>Needs</b><p class="g">Body</p></div>
<div class="c" style="left:1256.300px;top:495.300px;width:91px;height:30.700px"><b>Wants</b><p class="g">Body</p></div>
<div class="c" style="left:1158.300px;top:532.700px;width:90.700px;height:61.300px"><b>Inputs and Outputs</b><p>This goes back to the purpose of the
System which is to help me finish the
right things while enjoying the process.

Process is about creating the right inputs
to produce the right outputs.

Outputs are Results.</p></div>
<div class="c" style="left:1158.300px;top:600.700px;width:90.700px;height:77px"><b>Process needs to be enjoyable</b><p>The process needs to be enjoyable to
produce good results.

Maybe it's just me, but I'm very bad at
doing things I don't enjoy. When I don't
enjoy a project, I tend to quit fast. So I
pay a lot of attention to making my work
enjoyable. I prefer work to feel like play.
It's a pro level of play, like a professional
musician or athlete, but still play.</p></div>
<div class="c bl" style="left:1180.300px;top:706.700px;width:99px;height:115.300px"><b>The games in life</b><p>Here I need to tell you about how I think
about life and future. I think about life and
future in 2 frames: Short game and Long
game.

I think about life either in the context if the
next few months up to a year. Or very long
term. Not much in between.

Something like a 5-year plan is confusing to
me. I often can't predict what I will want to
do in a couple of months, so years seem like
a total B-ball business. So I stopped
planning for years ahead and I count on
having short term intentions which are
actionable and tangible. And very long-term
timeless intentions which influence how I
live today and expect to live forever.</p></div>
<div class="c bl" style="left:1294.300px;top:570.300px;width:99.700px;height:258.700px"><b>My Short Game</b><u><small>Beat</small>13½ - 14½</u><p>- Short Game is 3-12 months
- It has clear win condition (I can win)
- Results-heavy

My current short game is: I will make a living
as an independent writer.

In general, if what I enjoy doesn't make
enough money to sustain me, I will be my
short game focus. I did it two times already
after entering a new field (entrepreneurship,
design).

Make a living means "make enough money."
I have numbers for it: $2K profit on app per
month starting September 2022 would be
the ultimate win. Anything beyond that is a
bonus. Anything below that is a welcomed
too.

I enjoy this a lot. I need to monetize it. So
I'm working on a book. I'm considering some
kind of donation/subscription model. There
are options. And I'm looking for what feels
good based on my values.

For example, I don't want to do something
like a posh newsletter/articles behind a pay
wall. It doesn't feel good to me.

This intention is driven by my independence
value. I want to split my actions from
income. Which is a fancy way of saying I
want to do whatever the hell I want without
having to think "Will this be profitable?" I
want the freedom to do weird shit. Useful,
but weird.

This is my main intention for the short term. I
have a few others, like for getting in better
physical shape. But this one is at the top top
top. Getting there would make my life
tangibly better.</p></div>
<div class="c bl" style="left:1400px;top:570.300px;width:100px;height:258.700px"><b>My Long Game</b><u><small>Beat</small>14½ - 15</u><p>This is my current Long game. It might
change, but the sole definition of my long
game is that I expect it to be timeless.

I believe these things will be a major part of
my life forever. I would be surprised if they
changed but it might happen. (I don't want to
be stuck in the status quo bias. I want to
stay flexible and adapt.)

Let's remind the context and overall purpose
of this system: Help me finish the right
things while enjoying the process. If I put it
differently, I want to do things I care about
and enjoy my days as I do them.

These are the ingredients:

Be healthy
       - Eat well
       - Exercise
       - Meditate
Be wealthy
       - Have enough
       - Share
Be happy
       - Play
       - Make friends
Be smart
       - Stay curious
       - Learn
Be useful
       - Help others
       - Solve important problems

These overlap and work together. Meaning
that being happy isn't just about playing and
making friends. They correlate a lot but my
happiness is connected to health and
learning and other things too. Being useful is
based on being healthy too. In other words:
All of these are connected. (Process-heavy.)

I'm not going to explain every one of them.
Maybe some other time.</p></div>
<div class="c r" style="left:1400px;top:829px;width:100px;height:61px"><b>I'm done with learning.</b><p>Also, I'd be surprised if even in 30 years I
would look at this and thought: "Hmm, I'm
done with learning. It's BS and I don't need
it." I doubt that's going to happen. I view
these as timeless reminders of what a good
life is to me. I expect to add some or
rename them, but not to remove any.</p></div>

<!-- CHAPTER 4 -->
<div class="c h" style="left:1551.300px;width:378px"><b>CHAPTER 4: Choose the right projects to work on</b><u><small>Beat</small>15 - 18</u></div>
<div class="c" style="left:1551.300px;top:252.700px;width:91.700px;height:69px"><b>Specify and organize</b><u><small>Beat</small>15 - 15½</u><p>Areas and Projects (PARA)

Areas = ongoing responsibilities (work,
personal) (health, friends, relationship,
money, fun)

Projects = the "right things" to work on I
can actually finish (deliverables), can be
under areas or alone</p></div>
<div class="c" style="left:1672.700px;top:260px;width:92px;height:38.700px"><b>Avoid attention sinks</b><p>Avoid attention sinks (be careful what
you commit to, your mind will gets
drained)</p></div>
<div class="c" style="left:1551.300px;top:328.300px;width:91.700px;height:61.700px"><b>Areas</b><u><small>Beat</small>15½ - 16</u><p>I split Areas to work and personal. Work
is more structured into smaller areas,
personal is made of bigger chunks.

Long-term commitments, sources of
projects and actions</p></div>
<div class="c r" style="left:1643px;top:328px;width:107px;height:39px"><b>No system for playing board games</b><p>I don't have a specific system for playing more
board games with friends. Although... Fuck,
that's a good idea. I should get on it.
Anyway.</p></div>
<div class="c bl" style="left:1763.700px;top:328px;width:92.300px;height:39px"><b>My current Areas</b><u><small>Beat</small>16 - 16½</u><p>TK</p></div>
<div class="c" style="left:1551.300px;top:396.300px;width:91.700px;height:46.400px"><b>Projects</b><u><small>Beat</small>16½ - 17</u><p>(see tree deliverables)

- The right things to work on you can
finish
- Actionable</p></div>
<div class="c bl" style="left:1763.700px;top:396.300px;width:92.300px;height:38.700px"><b>My current Projects</b><u><small>Beat</small>17 - 17½</u><p>TK</p></div>
</div></div>

<!-- Status bar -->
<div class="ab" style="left:0;top:1179px;width:1920px;height:21px;background:#f1ecf2"></div>
<svg class="ab" style="left:1693px;top:1180px" width="14" height="18"><rect x="4.500" y="1" width="5" height="10" rx="2.500" fill="#777"/><path d="M2 7.500c0 6 10 6 10 0" fill="none" stroke="#777" stroke-width="1.500"/><rect x="2.500" y="14" width="9" height="2" fill="#777"/></svg>
<svg class="ab" style="left:1723px;top:1180px" width="18" height="18"><circle cx="9" cy="9" r="7" fill="none" stroke="#bbb" stroke-width="1.600"/><path d="M9 .5v3M9 14.500v3M.5 9h3M14.500 9h3" stroke="#bbb" stroke-width="1.400"/></svg>
<svg class="ab" style="left:1755px;top:1180px" width="14" height="18"><path d="M6 1c6 1 8 5 7 9-1 4-5 7-11 6 4-1 6-4 6-8 0-3-1-5-2-7z" fill="#808080"/></svg>
<div class="ab" style="left:1783px;top:1187px;width:80px;height:4px;background:#e2dde4;border-radius:2px"></div>
<div class="ab" style="left:1783px;top:1187px;width:12px;height:4px;background:#1e82ef;border-radius:2px"></div>
<div class="ab" style="left:1790px;top:1181px;width:16px;height:16px;background:#fff;border-radius:50%;box-shadow:0 0 2px #aaa"></div>
<div class="ab" style="left:1881px;top:1182px;font-size:11px;line-height:14px;color:#444">37%</div>
</div></body></html>
